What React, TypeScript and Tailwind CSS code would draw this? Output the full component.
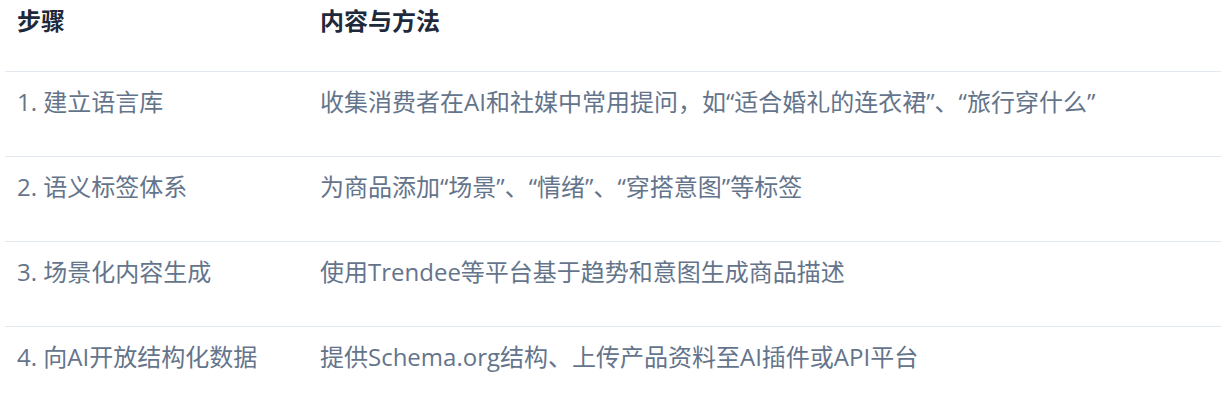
const rows = [
  { step: '1. 建立语言库', content: '收集消费者在AI和社媒中常用提问，如“适合婚礼的连衣裙”、“旅行穿什么”' },
  { step: '2. 语义标签体系', content: '为商品添加“场景”、“情绪”、“穿搭意图”等标签' },
  { step: '3. 场景化内容生成', content: '使用Trendee等平台基于趋势和意图生成商品描述' },
  { step: '4. 向AI开放结构化数据', content: '提供Schema.org结构、上传产品资料至AI插件或API平台' },
]

export default function App() {
  return (
    <div
      className="h-[410px] w-[1221px] overflow-hidden bg-white pl-[5px]"
      style={{ fontFamily: '"Open Sans", "Noto Sans CJK SC", sans-serif' }}
    >
      <table className="w-full border-collapse text-left text-[24px] leading-[36px]">
        <thead>
          <tr className="border-b border-[#e2e8f0]">
            <th className="w-[315px] pt-[3px] pb-[32px] pl-[12px] font-bold text-[#1e293b]">步骤</th>
            <th className="pt-[3px] pb-[32px] font-bold text-[#1e293b]">内容与方法</th>
          </tr>
        </thead>
        <tbody>
          {rows.map((r) => (
            <tr key={r.step} className="border-b border-[#e2e8f0] text-[#64748b]">
              <td className="pt-[12px] pb-[36px] pl-[12px] font-normal">{r.step}</td>
              <td className="pt-[12px] pb-[36px] font-normal">{r.content}</td>
            </tr>
          ))}
        </tbody>
      </table>
    </div>
  )
}
